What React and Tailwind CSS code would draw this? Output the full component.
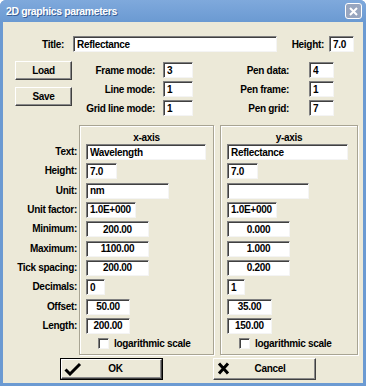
import React from "react";

const field =
  "block h-[16px] bg-white border border-t-[#7f7f7f] border-l-[#7f7f7f] border-r-[#f4f4f4] border-b-[#f4f4f4] shadow-[inset_1px_1px_0_#404040] px-[3px] text-[10px] font-bold text-black leading-[14px] tracking-[-0.3px] outline-none";

function Field({ w, value, center }) {
  return (
    <input
      readOnly
      defaultValue={value}
      className={`${field} ${w} ${center ? "text-center" : "text-left"}`}
    />
  );
}

function Button({ children, w, h, isDefault }) {
  return (
    <div
      className={`${w} ${h} ${isDefault ? "border border-black" : ""} flex`}
    >
      <div className="flex-1 flex items-center justify-center bg-[#ece9d8] border border-t-white border-l-white border-r-[#404040] border-b-[#404040] shadow-[inset_-1px_-1px_0_#8a8a8a] text-[10px] font-bold">
        {children}
      </div>
    </div>
  );
}

function AxisBox({ title, rows, w }) {
  return (
    <div
      className={`${w} border border-[#a8a493] shadow-[inset_1px_1px_0_white,1px_1px_0_white] pt-[5px] pb-[5px] pl-[6px]`}
    >
      <div className="h-[13px] leading-[13px] text-center text-[10px] font-bold pr-[6px]">
        {title}
      </div>
      <div className="flex flex-col gap-[3.33px]">
        {rows.map((r, i) => (
          <Field key={i} w={r.w} value={r.v} center={r.c} />
        ))}
      </div>
      <div className="flex items-center mt-[4px] ml-[12px] h-[11px]">
        <div className="w-[11px] h-[11px] bg-white border border-t-[#7f7f7f] border-l-[#7f7f7f] border-r-[#f4f4f4] border-b-[#f4f4f4] shadow-[inset_1px_1px_0_#404040]" />
        <span className="ml-[5px] text-[10px] font-bold leading-[11px]">
          logarithmic scale
        </span>
      </div>
    </div>
  );
}

const xRows = [
  { w: "w-[120px]", v: "Wavelength" },
  { w: "w-[31px]", v: "7.0" },
  { w: "w-[83px]", v: "nm" },
  { w: "w-[50px]", v: "1.0E+000" },
  { w: "w-[63px]", v: "200.00", c: true },
  { w: "w-[63px]", v: "1100.00", c: true },
  { w: "w-[63px]", v: "200.00", c: true },
  { w: "w-[19px]", v: "0" },
  { w: "w-[44px]", v: "50.00", c: true },
  { w: "w-[44px]", v: "200.00", c: true },
];

const yRows = [
  { w: "w-[121px]", v: "Reflectance" },
  { w: "w-[31px]", v: "7.0" },
  { w: "w-[82px]", v: "" },
  { w: "w-[50px]", v: "1.0E+000" },
  { w: "w-[63px]", v: "0.000", c: true },
  { w: "w-[63px]", v: "1.000", c: true },
  { w: "w-[63px]", v: "0.200", c: true },
  { w: "w-[18px]", v: "1" },
  { w: "w-[45px]", v: "35.00", c: true },
  { w: "w-[45px]", v: "150.00", c: true },
];

const axisLabels = [
  "Text:",
  "Height:",
  "Unit:",
  "Unit factor:",
  "Minimum:",
  "Maximum:",
  "Tick spacing:",
  "Decimals:",
  "Offset:",
  "Length:",
];

export default function App() {
  return (
    <div className="w-[366px] h-[386px] bg-[#6b9ad2] rounded-t-[6px] flex flex-col font-['Liberation_Sans',Arial,sans-serif] tracking-[-0.3px] text-black">
      {/* TITLE BAR */}
      <div className="h-[22px] shrink-0 flex items-center justify-between pl-[6px] pr-[4px] bg-gradient-to-b from-[#7fa9dc] to-[#6b9ad2] rounded-t-[6px]">
        <span className="text-white font-bold text-[10.5px] leading-[12px] tracking-[-0.4px] [text-shadow:1px_1px_0_#3a5f95]">
          2D graphics parameters
        </span>
        <div className="w-[17px] h-[16px] rounded-[3px] border border-white bg-[#98a6bf] flex items-center justify-center">
          <svg width="11" height="11" viewBox="0 0 11 11">
            <path d="M2 2 L9 9 M9 2 L2 9" stroke="white" strokeWidth="2" />
          </svg>
        </div>
      </div>

      {/* BODY */}
      <div className="flex-1 mx-[3px] mb-[3px] bg-[#ece9d8] pt-[14px] flex flex-col">
        {/* Title row */}
        <div className="flex items-center h-[16px]">
          <div className="w-[61px] text-right text-[10px] font-bold">Title:</div>
          <div className="ml-[9px]">
            <Field w="w-[204px]" value="Reflectance" />
          </div>
          <div className="w-[47px] text-right text-[10px] font-bold">Height:</div>
          <div className="ml-[5px]">
            <Field w="w-[25px]" value="7.0" />
          </div>
        </div>

        {/* Load / Save + modes */}
        <div className="flex mt-[9px] pl-[12px]">
          <div className="flex flex-col gap-[7px] w-[57px]">
            <Button w="w-[57px]" h="h-[19px]">Load</Button>
            <Button w="w-[57px]" h="h-[19px]">Save</Button>
          </div>
          <div className="flex flex-col gap-[3px] mt-[1px]">
            {[
              ["Frame mode:", "3"],
              ["Line mode:", "1"],
              ["Grid line mode:", "1"],
            ].map(([l, v]) => (
              <div key={l} className="flex items-center h-[16px]">
                <div className="w-[83px] text-right text-[10px] font-bold">{l}</div>
                <div className="ml-[8px]">
                  <Field w="w-[30px]" value={v} />
                </div>
              </div>
            ))}
          </div>
          <div className="flex flex-col gap-[3px] mt-[1px]">
            {[
              ["Pen data:", "4"],
              ["Pen frame:", "1"],
              ["Pen grid:", "7"],
            ].map(([l, v]) => (
              <div key={l} className="flex items-center h-[16px]">
                <div className="w-[96px] text-right text-[10px] font-bold">{l}</div>
                <div className="ml-[20px]">
                  <Field w="w-[25px]" value={v} />
                </div>
              </div>
            ))}
          </div>
        </div>

        {/* Axis boxes */}
        <div className="flex mt-[9px]">
          <div className="w-[74px] pt-[19px] flex flex-col gap-[3.33px]">
            {axisLabels.map((l) => (
              <div
                key={l}
                className="h-[16px] leading-[15px] text-right text-[10px] font-bold"
              >
                {l}
              </div>
            ))}
          </div>
          <div className="ml-[2px]">
            <AxisBox title="x-axis" rows={xRows} w="w-[135px]" />
          </div>
          <div className="ml-[6px]">
            <AxisBox title="y-axis" rows={yRows} w="w-[138px]" />
          </div>
        </div>

        {/* OK / Cancel */}
        <div className="flex mt-[3px] pl-[57px] gap-[50px]">
          <Button w="w-[103px]" h="h-[22px]" isDefault>
            <div className="w-full flex items-center">
              <svg width="18" height="14" viewBox="0 0 18 14" className="ml-[2px]">
                <path
                  d="M1.5 7.5 L6 12 L16 2"
                  fill="none"
                  stroke="black"
                  strokeWidth="3"
                />
              </svg>
              <span className="flex-1 text-center pr-[12px]">OK</span>
            </div>
          </Button>
          <Button w="w-[103px]" h="h-[22px]">
            <div className="w-full flex items-center">
              <svg width="14" height="13" viewBox="0 0 14 13" className="ml-[3px]">
                <path
                  d="M2 1.5 L11 11.5 M11 1.5 L2 11.5"
                  stroke="black"
                  strokeWidth="3"
                />
              </svg>
              <span className="flex-1 text-center pr-[6px]">Cancel</span>
            </div>
          </Button>
        </div>
      </div>
    </div>
  );
}
